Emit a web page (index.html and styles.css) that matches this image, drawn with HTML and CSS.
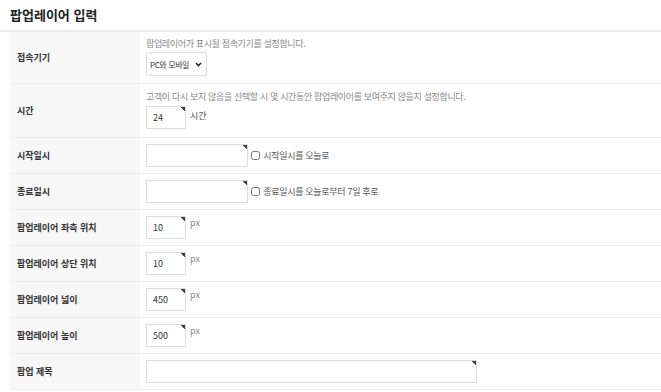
FILE: index.html
```html
<!DOCTYPE html>
<html lang="ko">
<head>
    <meta charset="UTF-8">
    <title>팝업레이어 입력</title>
    <link rel="stylesheet" href="styles.css">
</head>
<body>
    <h2 class="page-title">팝업레이어 입력</h2>

    <table class="form-table">
        <tr class="row-device">
            <th>접속기기</th>
            <td>
                <p class="help">팝업레이어가 표시될 접속기기를 설정합니다.</p>
                <span class="select-wrap">
                    <select class="device">
                        <option>PC와 모바일</option>
                        <option>PC</option>
                        <option>모바일</option>
                    </select>
                    <svg class="chevron" width="7" height="5" viewBox="0 0 7 5"><path d="M1 1l2.5 2.5L6 1" fill="none" stroke="#222" stroke-width="1.6"/></svg>
                </span>
            </td>
        </tr>
        <tr class="row-time">
            <th>시간</th>
            <td>
                <p class="help">고객이 다시 보지 않음을 선택할 시 몇 시간동안 팝업레이어를 보여주지 않을지 설정합니다.</p>
                <input type="text" class="field num" value="24"><span class="unit dark">시간</span>
            </td>
        </tr>
        <tr>
            <th>시작일시</th>
            <td>
                <input type="text" class="field date"><label class="chk"><input type="checkbox"> 시작일시를 오늘로</label>
            </td>
        </tr>
        <tr>
            <th>종료일시</th>
            <td>
                <input type="text" class="field date"><label class="chk"><input type="checkbox"> 종료일시를 오늘로부터 7일 후로</label>
            </td>
        </tr>
        <tr>
            <th>팝업레이어 좌측 위치</th>
            <td><input type="text" class="field num" value="10"><span class="unit">px</span></td>
        </tr>
        <tr>
            <th>팝업레이어 상단 위치</th>
            <td><input type="text" class="field num" value="10"><span class="unit">px</span></td>
        </tr>
        <tr>
            <th>팝업레이어 넓이</th>
            <td><input type="text" class="field num" value="450"><span class="unit">px</span></td>
        </tr>
        <tr>
            <th>팝업레이어 높이</th>
            <td><input type="text" class="field num" value="500"><span class="unit">px</span></td>
        </tr>
        <tr>
            <th>팝업 제목</th>
            <td><input type="text" class="field wide"></td>
        </tr>
    </table>
</body>
</html>
```

FILE: styles.css
```css
* {
    margin: 0;
    padding: 0;
    box-sizing: border-box;
}

body {
    font-family: "Noto Sans CJK KR", "Noto Sans", sans-serif;
    font-size: 9px;
    color: #333;
    background: #fff;
}

/* 제목 */
.page-title {
    font-size: 13px;
    font-weight: bold;
    color: #222;
    height: 32px;
    line-height: 30px;
    padding-left: 10px;
    border-bottom: 2px solid #ececec;
}

/* 입력 테이블 */
.form-table {
    margin-left: 10px;
    width: 651px;
    border-collapse: collapse;
}

.form-table tr {
    height: 36px;
    border-bottom: 1px solid #ececec;
}

.form-table tr.row-device {
    height: 51px;
}

.form-table tr.row-time {
    height: 54px;
}

.form-table th {
    width: 130px;
    background: #f7f7f7;
    text-align: left;
    font-weight: bold;
    font-size: 9px;
    padding-left: 7px;
    color: #333;
}

.form-table td {
    padding: 0 6px;
    vertical-align: middle;
}

.help {
    font-size: 9px;
    letter-spacing: -0.35px;
    color: #888;
    line-height: 12px;
    margin-bottom: 2px;
}

.row-time .help {
    margin-bottom: 3px;
}

/* 셀렉트 박스 */
.select-wrap {
    position: relative;
    display: inline-block;
    vertical-align: top;
}

.device {
    display: block;
    width: 61px;
    height: 24px;
    font-family: inherit;
    font-size: 8px;
    letter-spacing: -0.4px;
    color: #333;
    border: 1px solid #ddd;
    border-radius: 2px;
    background: #fff;
    padding: 0 0 0 3px;
    appearance: none;
    -webkit-appearance: none;
}

.chevron {
    position: absolute;
    right: 5px;
    top: 10px;
    pointer-events: none;
}

/* 입력칸 오른쪽 위 표시 */
.field {
    height: 23px;
    border: 1px solid #ddd;
    font-family: inherit;
    font-size: 9px;
    color: #333;
    padding-left: 6px;
    vertical-align: top;
    background: linear-gradient(225deg, #444 3px, transparent 3px) no-repeat right top / 6px 6px, #fff;
}

.num {
    width: 40px;
}

.date {
    width: 102px;
}

.wide {
    width: 331px;
}

.unit {
    display: inline-block;
    margin-left: 4px;
    font-size: 9px;
    line-height: 14px;
    vertical-align: top;
    color: #888;
}

.unit.dark {
    color: #555;
    line-height: 20px;
}

.chk {
    display: inline-block;
    margin-left: 3px;
    font-size: 9px;
    letter-spacing: -0.3px;
    color: #555;
    line-height: 23px;
    vertical-align: top;
}

.chk input {
    width: 9px;
    height: 9px;
    margin: 0 1px 0 0;
    vertical-align: -1px;
}
```
